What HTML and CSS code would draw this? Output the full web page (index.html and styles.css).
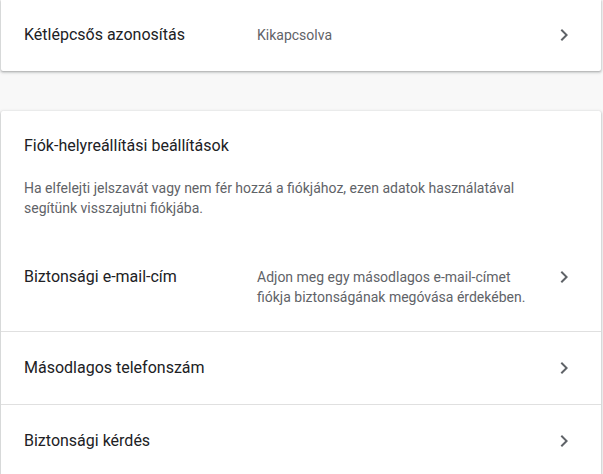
FILE: index.html
```html
<!DOCTYPE html>
<html lang="hu">
<head>
<meta charset="utf-8">
<link rel="stylesheet" href="styles.css">
</head>
<body>
<div class="page">
  <section class="card card-top">
    <div class="row">
      <div class="label">Kétlépcsős azonosítás</div>
      <div class="value">Kikapcsolva</div>
      <svg class="chev" viewBox="0 0 24 24" width="24" height="24"><path d="M10 6L8.59 7.41 13.17 12l-4.58 4.59L10 18l6-6z"/></svg>
    </div>
  </section>

  <section class="card card-recovery">
    <header class="head">
      <h2 class="title">Fiók-helyreállítási beállítások</h2>
      <p class="desc">Ha elfelejti jelszavát vagy nem fér hozzá a fiókjához, ezen adatok használatával segítünk visszajutni fiókjába.</p>
    </header>
    <div class="row row-first">
      <div class="label">Biztonsági e-mail-cím</div>
      <div class="value value-multi">Adjon meg egy másodlagos e-mail-címet fiókja biztonságának megóvása érdekében.</div>
      <svg class="chev" viewBox="0 0 24 24" width="24" height="24"><path d="M10 6L8.59 7.41 13.17 12l-4.58 4.59L10 18l6-6z"/></svg>
    </div>
    <div class="row">
      <div class="label">Másodlagos telefonszám</div>
      <div class="value"></div>
      <svg class="chev" viewBox="0 0 24 24" width="24" height="24"><path d="M10 6L8.59 7.41 13.17 12l-4.58 4.59L10 18l6-6z"/></svg>
    </div>
    <div class="row">
      <div class="label">Biztonsági kérdés</div>
      <div class="value"></div>
      <svg class="chev" viewBox="0 0 24 24" width="24" height="24"><path d="M10 6L8.59 7.41 13.17 12l-4.58 4.59L10 18l6-6z"/></svg>
    </div>
  </section>
</div>
</body>
</html>
```
FILE: styles.css
```css
html, body {
  margin: 0;
  padding: 0;
  background: #f8f8f8;
  font-family: Roboto, "Noto Sans", Arial, sans-serif;
  color: #202124;
}
.page {
  padding: 0 2px 40px 1px;
  display: flex;
  flex-direction: column;
  gap: 40px;
}
.card {
  background: #fff;
  box-shadow: 0 1px 2px rgba(60, 64, 67, 0.3), 0 1px 3px 1px rgba(60, 64, 67, 0.15);
}
.card-top {
  border-radius: 0 0 2px 2px;
}
.card-top .row {
  padding: 23px 25px 24px 23px;
}
.card-recovery {
  border-radius: 2px 2px 0 0;
}
.row {
  display: flex;
  align-items: flex-start;
  padding: 24px 25px 24px 23px;
  border-top: 1px solid #e0e0e0;
}
.card-top .row,
.row-first {
  border-top: none;
}
.label {
  width: 233px;
  flex: none;
  font-size: 16px;
  line-height: 24px;
  color: #202124;
}
.value {
  flex: 1;
  font-size: 14px;
  line-height: 24px;
  color: #5f6368;
}
.value-multi {
  line-height: 20px;
  padding-top: 2px;
  padding-right: 20px;
}
.chev {
  flex: none;
  fill: #5f6368;
}
.head {
  padding: 23px 24px 23px 23px;
}
.title {
  margin: 0;
  font-size: 16px;
  font-weight: 400;
  line-height: 24px;
  color: #202124;
}
.desc {
  margin: 20px 0 0;
  font-size: 14px;
  line-height: 20px;
  color: #5f6368;
  max-width: 520px;
}
```
